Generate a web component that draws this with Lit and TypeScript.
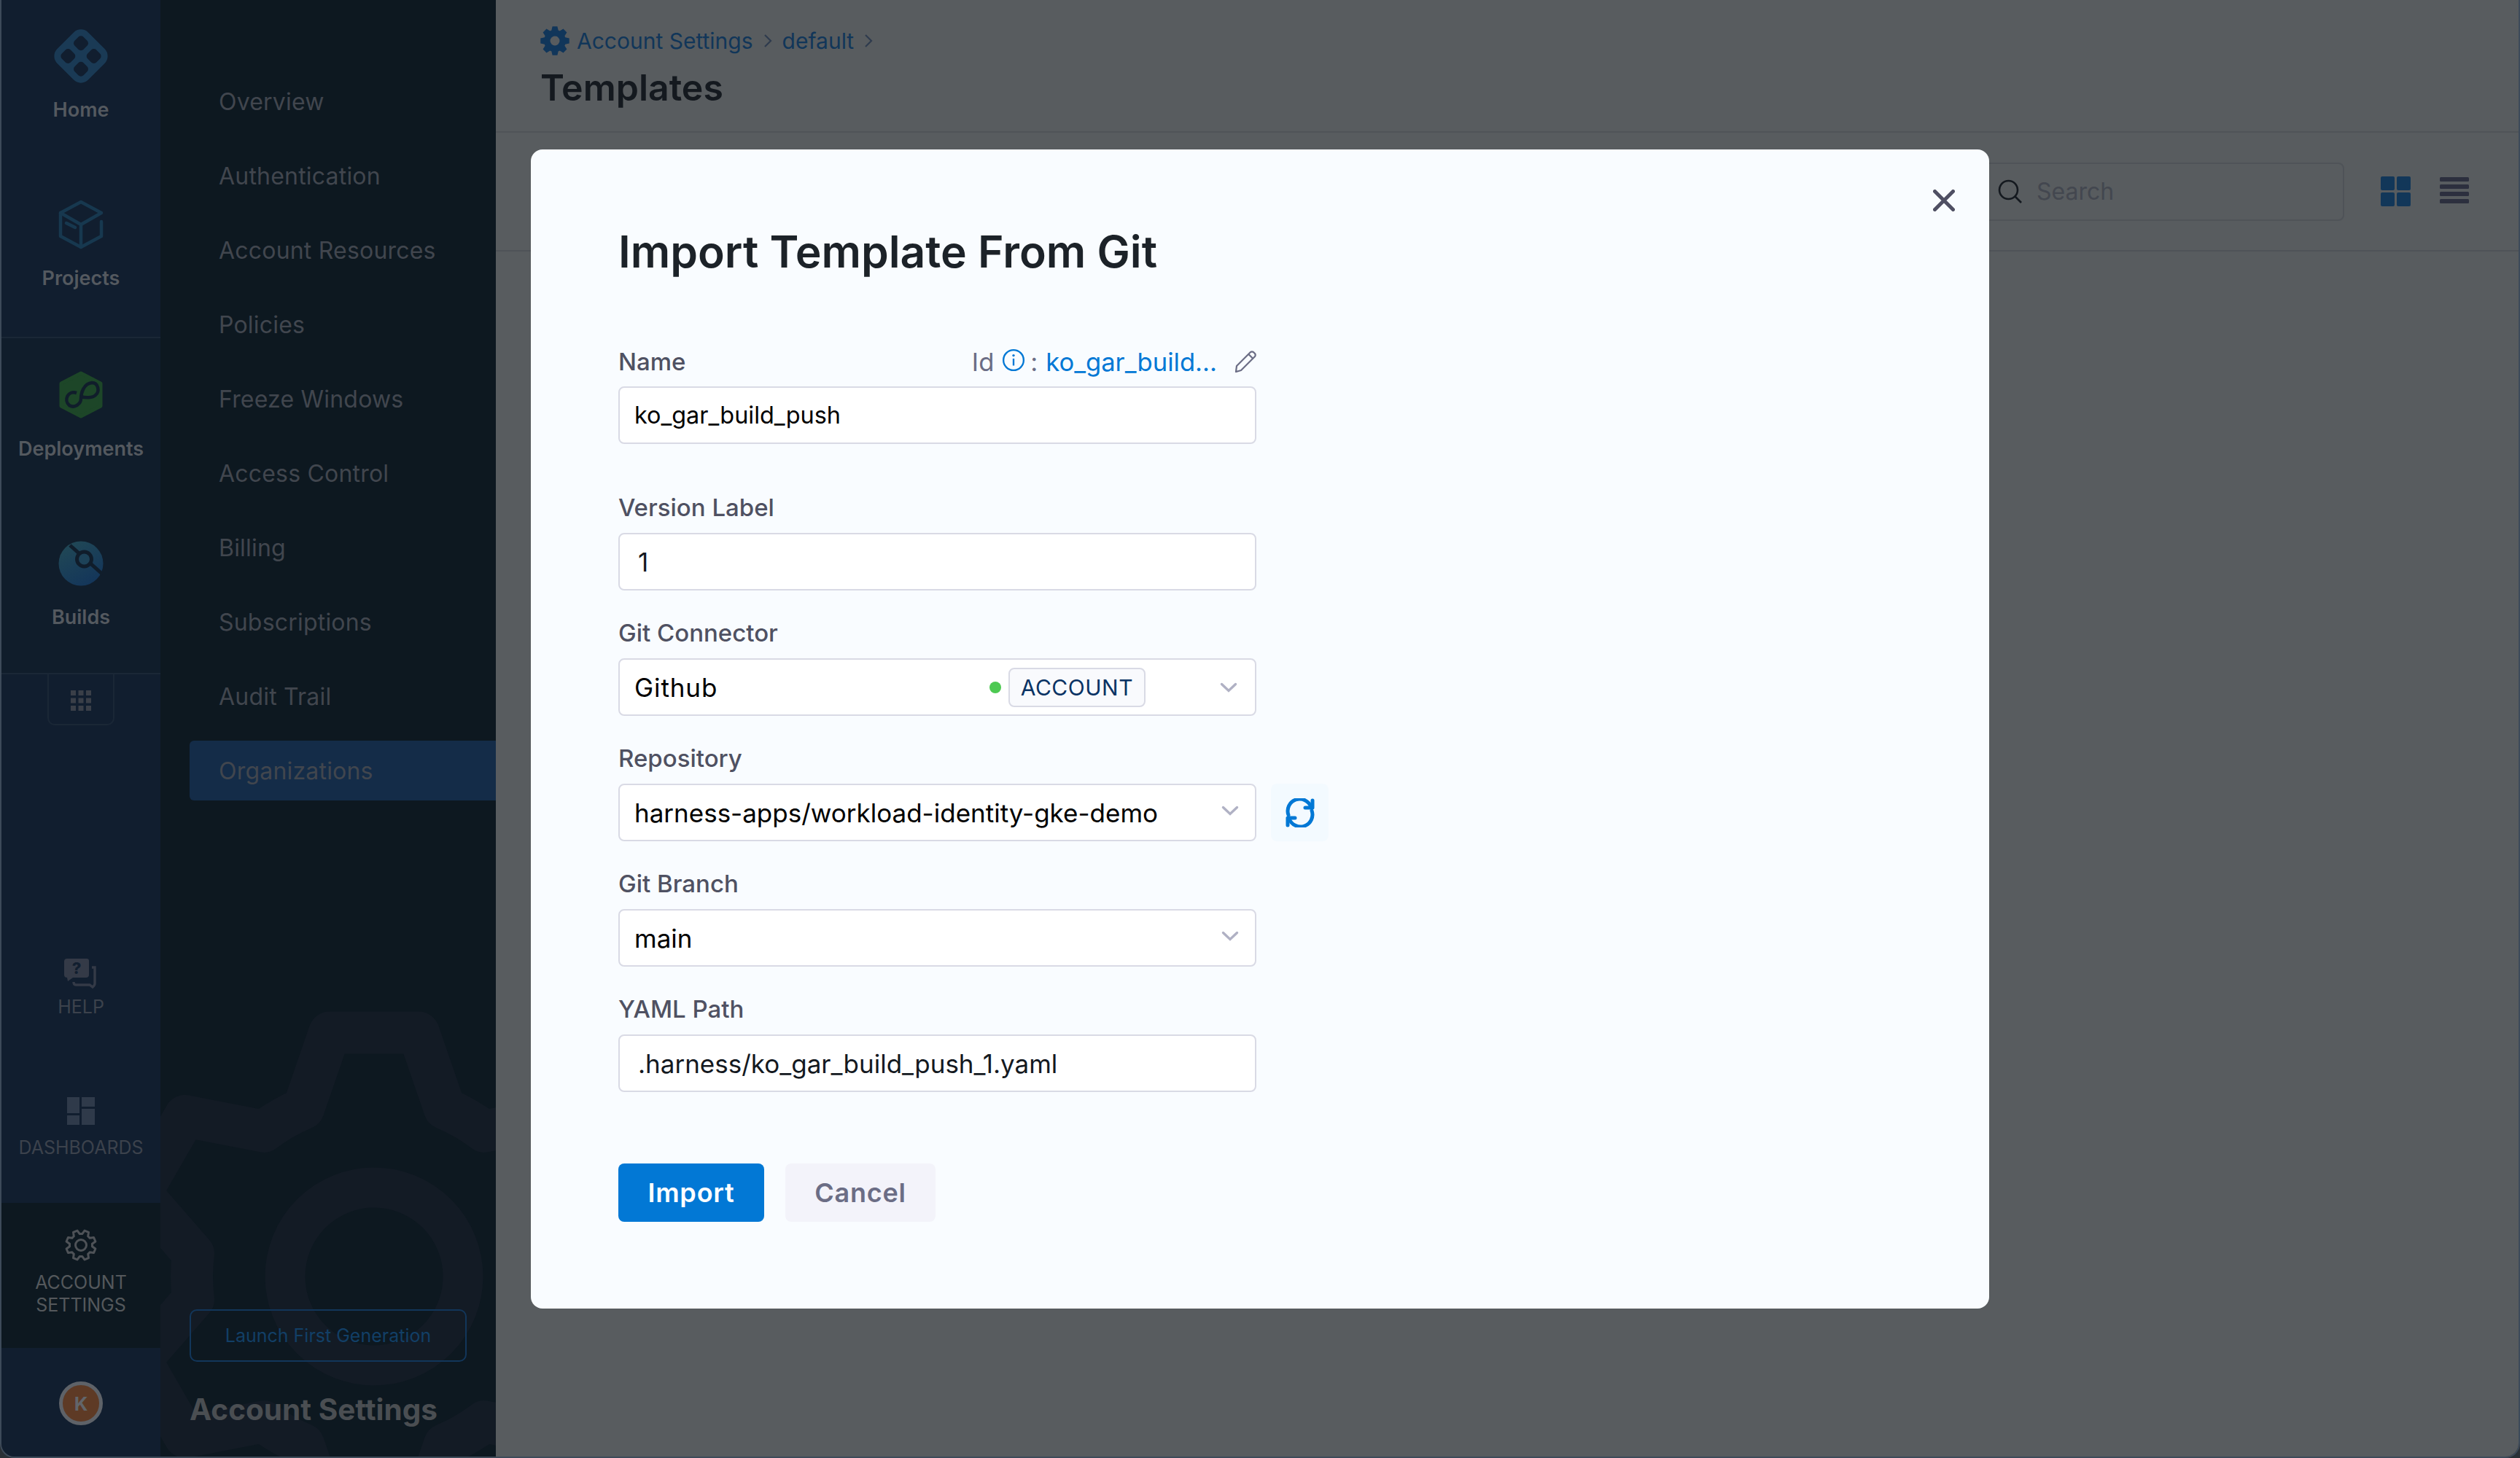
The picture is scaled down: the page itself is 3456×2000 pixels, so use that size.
import { LitElement, html, svg, css } from "lit";
import { customElement } from "lit/decorators.js";

// builds a closed gear outline; teeth point outwards from the centre
function gearPath(cx: number, cy: number, teeth: number, rBody: number, rTip: number, halfBase: number, halfTip: number, start = 0) {
  const pt = (r: number, a: number) => `${(cx + r * Math.sin(a)).toFixed(1)} ${(cy - r * Math.cos(a)).toFixed(1)}`;
  const baseA = Math.atan(halfBase / rBody);
  const tipA = Math.atan(halfTip / rTip);
  let d = "";
  for (let i = 0; i < teeth; i++) {
    const a = start + (i * 2 * Math.PI) / teeth;
    d += `${i === 0 ? "M" : "A" + rBody + " " + rBody + " 0 0 1"} ${pt(rBody, a - baseA)} `;
    d += `L${pt(rTip, a - tipA)} L${pt(rTip, a + tipA)} L${pt(rBody, a + baseA)} `;
  }
  const first = start - baseA;
  return d + `A${rBody} ${rBody} 0 0 1 ${pt(rBody, first)} Z`;
}

const homeIcon = html`<svg width="78" height="78" viewBox="0 0 78 78">
  <g transform="rotate(45 39 39)">
    <rect x="9" y="9" width="60" height="60" rx="14" fill="#1a3a55"></rect>
    <rect x="18" y="18" width="17" height="17" rx="5" fill="#111e2f"></rect>
    <rect x="43" y="18" width="17" height="17" rx="5" fill="#111e2f"></rect>
    <rect x="18" y="43" width="17" height="17" rx="5" fill="#111e2f"></rect>
    <rect x="43" y="43" width="17" height="17" rx="5" fill="#111e2f"></rect>
  </g>
</svg>`;

const projectsIcon = html`<svg width="78" height="78" viewBox="-9 -6 78 78" fill="none" stroke="#17384f" stroke-width="4.5" stroke-linejoin="round" stroke-linecap="round">
  <path d="M30 33 L58 17 L30 2 L2 17 V49 L30 64 L58 49 V29"></path>
  <path d="M30 33 V64 M2 17 L30 33 M10 31 L22 37"></path>
</svg>`;

const deploymentsIcon = html`<svg width="78" height="78" viewBox="-9 -6 78 78">
  <path d="M30 3 L57 17 V48 L30 62 L3 48 V17 Z" fill="#1d4628" stroke="#1d4628" stroke-width="5" stroke-linejoin="round"></path>
  <path d="M24 30 C12 26 6 40 14 47 C22 52 30 44 30 38 C30 30 34 17 45 16 C54 16 56 28 50 33 C46 37 36 37 30 35" fill="none" stroke="#101d2b" stroke-width="4.5"></path>
</svg>`;

const buildsIcon = html`<svg width="78" height="78" viewBox="-9 -9 78 78">
  <defs>
    <linearGradient id="bg" x1="0" y1="0" x2="0.6" y2="1">
      <stop offset="0" stop-color="#224a55"></stop>
      <stop offset="1" stop-color="#14365a"></stop>
    </linearGradient>
  </defs>
  <circle cx="30" cy="30" r="30.5" fill="url(#bg)"></circle>
  <path d="M15 5 L60 45" stroke="#101d2b" stroke-width="5"></path>
  <circle cx="34.5" cy="24" r="10" fill="#1d4258" stroke="#101d2b" stroke-width="5"></circle>
</svg>`;

const appsIcon = html`<svg width="28" height="28" viewBox="0 0 28 28" fill="#3a3f48">
  ${[0, 10.5, 21].map((y) => [0, 10.5, 21].map((x) => svg`<rect x=${x} y=${y} width="7" height="7"></rect>`))}
</svg>`;

const helpIcon = html`<svg width="46" height="42" viewBox="0 0 46 42">
  <path d="M4 0 H31 Q34 0 34 3 V22 Q34 26 30 26 H12 L5 31 L4 26 Q0 26 0 22 V4 Q0 0 4 0 Z" fill="#343a47"></path>
  <text x="17" y="21" font-size="22" font-weight="800" font-family="Inter" text-anchor="middle" fill="#111e2f">?</text>
  <path d="M38 12 H42 V34 Q42 36 41 37 L39 39 L35 36 H16 Q13 36 13 32" fill="none" stroke="#343a47" stroke-width="3.4"></path>
</svg>`;

const dashboardsIcon = html`<svg width="38" height="38" viewBox="0 0 38 38" fill="#2f3a4a">
  <rect x="0" y="0" width="17" height="22"></rect>
  <rect x="0" y="25" width="17" height="13"></rect>
  <rect x="20" y="0" width="18" height="13"></rect>
  <rect x="20" y="16" width="18" height="22"></rect>
</svg>`;

const settingsIcon = html`<svg width="44" height="46" viewBox="0 0 44 46" fill="none" stroke="#4e5257" stroke-width="3" stroke-linejoin="round">
  <path d=${gearPath(22, 23, 8, 15.5, 20.5, 4.5, 3, Math.PI / 8)}></path>
  <circle cx="22" cy="23" r="7.5"></circle>
</svg>`;

const crumbGear = html`<svg width="40" height="40" viewBox="0 0 40 40">
  <path d=${gearPath(20, 20, 8, 15, 20, 5, 3.5)} fill="#11365a"></path>
  <circle cx="20" cy="20" r="6.5" fill="#585c5f"></circle>
</svg>`;

const chevronRight = html`<svg class="crumb-chev" width="14" height="20" viewBox="0 0 14 20" fill="none" stroke="#2f3b4e" stroke-width="2.2">
  <path d="M3 2 L11 10 L3 18"></path>
</svg>`;

const searchIcon = html`<svg width="34" height="34" viewBox="0 0 34 34" fill="none" stroke="#14191f" stroke-width="2.6">
  <circle cx="14.5" cy="14.5" r="12.5"></circle>
  <path d="M23.5 23.5 L32 32"></path>
</svg>`;

const gridIcon = html`<svg width="41" height="41" viewBox="0 0 41 41" fill="#123759">
  <rect x="0" y="0" width="19" height="19" rx="2"></rect>
  <rect x="22" y="0" width="19" height="19" rx="2"></rect>
  <rect x="0" y="22" width="19" height="19" rx="2"></rect>
  <rect x="22" y="22" width="19" height="19" rx="2"></rect>
</svg>`;

const listIcon = html`<svg width="40" height="36" viewBox="0 0 40 36" fill="#2c2f3e">
  <rect x="0" y="0" width="40" height="6" rx="1.5"></rect>
  <rect x="0" y="10" width="40" height="6" rx="1.5"></rect>
  <rect x="0" y="20" width="40" height="6" rx="1.5"></rect>
  <rect x="0" y="30" width="40" height="6" rx="1.5"></rect>
</svg>`;

const closeIcon = html`<svg width="30" height="30" viewBox="0 0 30 30" fill="none" stroke="#4f4f63" stroke-width="5" stroke-linecap="round">
  <path d="M2.5 2.5 L27.5 27.5 M27.5 2.5 L2.5 27.5"></path>
</svg>`;

const infoIcon = html`<svg width="32" height="32" viewBox="0 0 30 30" fill="none" stroke="#0278d5" stroke-width="2.2">
  <circle cx="15" cy="15" r="13"></circle>
  <path d="M15 13 V22"></path>
  <circle cx="15" cy="9" r="1.6" fill="#0278d5" stroke="none"></circle>
</svg>`;

const pencilIcon = html`<svg width="30" height="30" viewBox="0 0 30 30" fill="none" stroke="#6b6d85" stroke-width="2.2" stroke-linejoin="round">
  <path d="M22 2 Q24 0.8 26 2 L28 4 Q29.4 6 28 8 L9 27 L2 29 L3 21 Z"></path>
  <path d="M19.5 5 L25.5 11"></path>
</svg>`;

const chevronDown = html`<svg width="24" height="14" viewBox="0 0 24 14" fill="none" stroke="#b0b1c4" stroke-width="3.4" stroke-linecap="round">
  <path d="M2.5 2.5 L12 11.5 L21.5 2.5"></path>
</svg>`;

const refreshIcon = html`<svg width="40" height="40" viewBox="0 0 40 40" fill="none" stroke="#0278d5" stroke-width="5" stroke-linecap="round" stroke-linejoin="round">
  <path d="M4 23 A16 16 0 0 1 35 12"></path>
  <path d="M37 3 V13 H27"></path>
  <path d="M36 17 A16 16 0 0 1 5 28"></path>
  <path d="M3 37 V27 H13"></path>
</svg>`;

@customElement("app-root")
export class AppRoot extends LitElement {
  static styles = css`
    :host {
      display: block;
      width: 3456px;
      height: 2000px;
      background: #2a3036;
      font-family: Inter, "Noto Sans", sans-serif;
    }
    .window {
      position: relative;
      display: flex;
      box-sizing: border-box;
      height: 2000px;
      overflow: hidden;
      border: 2px solid #3d4a59;
      border-top: 0;
      border-radius: 0 0 20px 20px;
    }

    /* icon rail */
    .rail {
      display: flex;
      flex-direction: column;
      align-items: stretch;
      width: 218px;
      flex: none;
      background: #111e2f;
    }
    .rail-group {
      display: flex;
      flex-direction: column;
      padding-top: 38px;
      height: 462px;
      flex: none;
      box-sizing: border-box;
    }
    .rail-group.second {
      height: 463px;
      padding-top: 39px;
      background: #101d2b;
      border-top: 2px solid #1a2736;
      border-bottom: 2px solid #1a2736;
    }
    .rail-item {
      display: flex;
      flex-direction: column;
      align-items: center;
      flex: none;
      height: 231px;
    }
    .rail-item svg {
      margin-bottom: 15px;
    }
    .rail-label {
      height: 40px;
      line-height: 40px;
      font-size: 27px;
      font-weight: 600;
      color: #54595f;
    }
    .apps {
      align-self: center;
      display: flex;
      align-items: center;
      justify-content: center;
      flex: none;
      width: 92px;
      height: 70px;
      padding-top: 4px;
      box-sizing: border-box;
      border: 2px solid #1a2736;
      border-top: 0;
      border-radius: 0 0 10px 10px;
    }
    .rail-bottom {
      margin-top: auto;
      display: flex;
      flex-direction: column;
      align-items: center;
    }
    .util {
      display: flex;
      flex-direction: column;
      align-items: center;
      color: #3c424c;
      font-size: 25px;
      line-height: 32px;
    }
    .util.dash {
      margin-top: 108px;
    }
    .util.help svg {
      margin-bottom: 8px;
    }
    .util.dash svg {
      margin-bottom: 15px;
    }
    .util.active {
      align-self: stretch;
      height: 199px;
      margin-top: 60px;
      padding-top: 35px;
      box-sizing: border-box;
      background: #0d1820;
      color: #54585c;
      text-align: center;
      line-height: 31px;
    }
    .util.active svg {
      margin-bottom: 13px;
    }
    .avatar {
      display: flex;
      align-items: center;
      justify-content: center;
      width: 60px;
      height: 60px;
      margin: 46px 0 43px;
      box-sizing: border-box;
      border: 5px solid #5e6268;
      border-radius: 50%;
      background: #5e3a25;
      color: #62656a;
      font-size: 26px;
      font-weight: 700;
    }

    /* secondary nav */
    .nav {
      position: relative;
      width: 460px;
      flex: none;
      height: 100%;
      box-sizing: border-box;
      padding: 88px 0 0 40px;
      background: #0d1820;
      overflow: hidden;
    }
    .gear {
      position: absolute;
      left: 0;
      top: 1300px;
    }
    .nav-list {
      position: relative;
      display: flex;
      flex-direction: column;
    }
    .nav-item {
      display: flex;
      align-items: center;
      height: 102px;
      padding-left: 40px;
      font-size: 32px;
      letter-spacing: 0.2px;
      color: #41464e;
    }
    .nav-item.current {
      height: 82px;
      margin-top: 10px;
      border-radius: 6px 0 0 6px;
      background: #142c48;
    }
    .nav-foot {
      position: absolute;
      left: 40px;
      bottom: 36px;
    }
    .launch {
      display: flex;
      align-items: center;
      justify-content: center;
      box-sizing: border-box;
      width: 380px;
      height: 72px;
      border: 2px solid #12365a;
      border-radius: 10px;
      color: #123f66;
      font-size: 25px;
    }
    .nav-title {
      margin-top: 38px;
      font-size: 40.5px;
      line-height: 56px;
      font-weight: 700;
      color: #4a4e52;
    }

    /* page behind the dialog */
    .main {
      flex: 1;
      background: #585c5f;
    }
    .page-head {
      box-sizing: border-box;
      height: 182px;
      padding: 34px 0 0 61px;
      border-bottom: 2px solid #4f5358;
    }
    .crumbs {
      display: flex;
      align-items: center;
      height: 44px;
      color: #113659;
      font-size: 30px;
    }
    .crumbs svg:first-child {
      margin-right: 10px;
    }
    .crumb-chev {
      margin: 0 13px;
    }
    .page-title {
      margin-top: 10px;
      font-size: 50px;
      line-height: 64px;
      font-weight: 600;
      color: #14191f;
    }
    .toolbar {
      display: flex;
      align-items: center;
      justify-content: flex-end;
      box-sizing: border-box;
      height: 163px;
      padding-right: 68px;
      border-bottom: 2px solid #4f5358;
    }
    .search {
      display: flex;
      align-items: center;
      gap: 19px;
      box-sizing: border-box;
      width: 500px;
      height: 80px;
      padding-left: 23px;
      margin-right: 50px;
      border: 2px solid #4f5358;
      border-radius: 8px;
      color: #43474f;
      font-size: 32px;
    }
    .view-list {
      margin-left: 40px;
    }

    /* dialog */
    .modal {
      position: absolute;
      left: 726px;
      top: 205px;
      box-sizing: border-box;
      width: 2000px;
      height: 1590px;
      padding: 100px 0 0 120px;
      border-radius: 16px;
      background: #f9fcff;
    }
    .close {
      position: absolute;
      top: 55px;
      right: 47px;
      display: flex;
    }
    h1 {
      margin: 0 0 90px;
      font-size: 60.5px;
      line-height: 80px;
      font-weight: 600;
      color: #1c2228;
    }
    .form {
      width: 875px;
    }
    .name-row {
      display: flex;
      align-items: center;
      justify-content: space-between;
      box-sizing: border-box;
      height: 40px;
      margin-bottom: 15px;
      padding-top: 2px;
    }
    .name-row label {
      margin: 0;
    }
    .id-row {
      display: flex;
      align-items: center;
      color: #6b6d85;
      font-size: 34.6px;
    }
    .id-row .info {
      display: flex;
      margin: -4px 7px 0 11px;
    }
    .id-row .link {
      margin-left: 11px;
      color: #0278d5;
    }
    .id-row .edit {
      display: flex;
      margin-left: 24px;
    }
    label {
      display: block;
      height: 40px;
      line-height: 40px;
      margin-bottom: 15px;
      font-size: 33px;
      font-weight: 500;
      color: #4f5162;
    }
    .field {
      margin-top: 38px;
    }
    .field.spaced {
      margin-top: 67px;
    }
    .box {
      display: flex;
      align-items: center;
      flex: none;
      box-sizing: border-box;
      width: 875px;
      height: 79px;
      padding: 0 22px 0 20px;
      border: 2px solid #d9dae5;
      border-radius: 8px;
      background: #ffffff;
      font-size: 35px;
      color: #000000;
    }
    .box.slim {
      font-size: 32.4px;
    }
    .box.inset {
      padding-left: 25px;
      color: #14191f;
    }
    .box .push {
      margin: -5px 0 0 auto;
      display: flex;
    }
    .box.wide-text {
      padding-right: 24px;
      font-size: 35px;
      letter-spacing: 0.9px;
    }
    .dot {
      width: 16px;
      height: 16px;
      margin-left: auto;
      border-radius: 50%;
      background: #4dc952;
    }
    .tag {
      display: flex;
      align-items: center;
      box-sizing: border-box;
      height: 54px;
      margin: 0 102px 0 10px;
      padding: 0 15px;
      border: 2px solid #d9dae5;
      border-radius: 8px;
      background: #f9fafd;
      color: #0a3364;
      font-size: 30px;
      letter-spacing: 0.5px;
    }
    .row {
      display: flex;
      gap: 20px;
    }
    .refresh {
      display: flex;
      align-items: center;
      justify-content: center;
      flex: none;
      width: 79px;
      height: 79px;
      border-radius: 8px;
      background: #f3faff;
    }
    .actions {
      display: flex;
      gap: 29px;
      margin-top: 98px;
    }
    .btn {
      display: flex;
      align-items: center;
      justify-content: center;
      box-sizing: border-box;
      height: 80px;
      border-radius: 8px;
      font-size: 36px;
      letter-spacing: 0.8px;
      font-weight: 600;
    }
    .btn.primary {
      width: 200px;
      background: #0278d5;
      color: #ffffff;
    }
    .btn.ghost {
      width: 206px;
      background: #f3f3fa;
      color: #6b6d85;
    }
  `;

  private navItems = [
    "Overview",
    "Authentication",
    "Account Resources",
    "Policies",
    "Freeze Windows",
    "Access Control",
    "Billing",
    "Subscriptions",
    "Audit Trail",
  ];

  render() {
    return html`
      <div class="window">
        <aside class="rail">
          <div class="rail-group">
            <div class="rail-item">${homeIcon}<span class="rail-label">Home</span></div>
            <div class="rail-item">${projectsIcon}<span class="rail-label">Projects</span></div>
          </div>
          <div class="rail-group second">
            <div class="rail-item">${deploymentsIcon}<span class="rail-label">Deployments</span></div>
            <div class="rail-item">${buildsIcon}<span class="rail-label">Builds</span></div>
          </div>
          <div class="apps">${appsIcon}</div>
          <div class="rail-bottom">
            <div class="util help">${helpIcon}<span>HELP</span></div>
            <div class="util dash">${dashboardsIcon}<span>DASHBOARDS</span></div>
            <div class="util active">${settingsIcon}<div>ACCOUNT<br />SETTINGS</div></div>
            <div class="avatar">K</div>
          </div>
        </aside>

        <nav class="nav">
          <svg class="gear" width="460" height="700" viewBox="0 1300 460 700" fill="none" stroke="#131b25">
            <path d=${gearPath(293, 1751, 6, 250, 340, 105, 62)} stroke-width="58" stroke-linejoin="round"></path>
            <circle cx="293" cy="1751" r="122" stroke-width="55"></circle>
          </svg>
          <div class="nav-list">
            ${this.navItems.map((item) => html`<div class="nav-item">${item}</div>`)}
            <div class="nav-item current">Organizations</div>
          </div>
          <div class="nav-foot">
            <div class="launch">Launch First Generation</div>
            <div class="nav-title">Account Settings</div>
          </div>
        </nav>

        <main class="main">
          <header class="page-head">
            <div class="crumbs">${crumbGear}<span>Account Settings</span>${chevronRight}<span>default</span>${chevronRight}</div>
            <div class="page-title">Templates</div>
          </header>
          <div class="toolbar">
            <div class="search">${searchIcon}<span>Search</span></div>
            ${gridIcon}
            <span class="view-list">${listIcon}</span>
          </div>
        </main>

        <section class="modal">
          <span class="close">${closeIcon}</span>
          <h1>Import Template From Git</h1>
          <div class="form">
            <div>
              <div class="name-row">
                <label>Name</label>
                <div class="id-row">
                  <span>Id</span><span class="info">${infoIcon}</span><span>:</span>
                  <span class="link">ko_gar_build...</span><span class="edit">${pencilIcon}</span>
                </div>
              </div>
              <div class="box slim">ko_gar_build_push</div>
            </div>
            <div class="field spaced">
              <label>Version Label</label>
              <div class="box inset">1</div>
            </div>
            <div class="field">
              <label>Git Connector</label>
              <div class="box wide-text">
                <span>Github</span><span class="dot"></span><span class="tag">ACCOUNT</span>${chevronDown}
              </div>
            </div>
            <div class="field">
              <label>Repository</label>
              <div class="row">
                <div class="box">
                  <span>harness-apps/workload-identity-gke-demo</span><span class="push">${chevronDown}</span>
                </div>
                <div class="refresh">${refreshIcon}</div>
              </div>
            </div>
            <div class="field">
              <label>Git Branch</label>
              <div class="box"><span>main</span><span class="push">${chevronDown}</span></div>
            </div>
            <div class="field">
              <label>YAML Path</label>
              <div class="box inset">.harness/ko_gar_build_push_1.yaml</div>
            </div>
            <div class="actions">
              <div class="btn primary">Import</div>
              <div class="btn ghost">Cancel</div>
            </div>
          </div>
        </section>
      </div>
    `;
  }
}
